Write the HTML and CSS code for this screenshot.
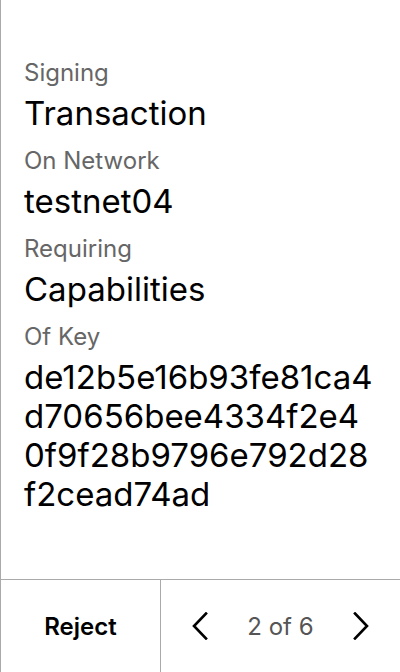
FILE: index.html
```html
<!DOCTYPE html>
<html>
<head>
<meta charset="utf-8">
<link rel="stylesheet" href="styles.css">
</head>
<body>
<div class="screen">
  <main class="content">
    <div class="label">Signing</div>
    <div class="value">Transaction</div>
    <div class="label">On Network</div>
    <div class="value">testnet04</div>
    <div class="label">Requiring</div>
    <div class="value">Capabilities</div>
    <div class="label">Of Key</div>
    <div class="value key">de12b5e16b93fe81ca4d70656bee4334f2e40f9f28b9796e792d28f2cead74ad</div>
  </main>
  <footer class="bar">
    <div class="reject">Reject</div>
    <div class="pager">
      <svg class="chev" width="16" height="28" viewBox="0 0 16 28"><polyline points="14,1.5 2,14 14,26.5" fill="none" stroke="#000" stroke-width="2.6" stroke-linecap="square"/></svg>
      <span class="count">2 of 6</span>
      <svg class="chev" width="16" height="28" viewBox="0 0 16 28"><polyline points="2,1.5 14,14 2,26.5" fill="none" stroke="#000" stroke-width="2.6" stroke-linecap="square"/></svg>
    </div>
  </footer>
</div>
</body>
</html>
```
FILE: styles.css
```css
html, body {
  margin: 0;
  padding: 0;
  background: #fff;
}
body {
  font-family: Inter, "Noto Sans", sans-serif;
  color: #000;
}
.screen {
  width: 400px;
  height: 672px;
  box-sizing: border-box;
  border-left: 1px solid #aaa;
  display: flex;
  flex-direction: column;
}
.content {
  flex: 1;
  padding: 58px 24px 0 23px;
}
.label {
  font-size: 24px;
  line-height: 29px;
  color: #666;
  margin-bottom: 7px;
}
.value {
  font-size: 33px;
  line-height: 38px;
  margin-bottom: 14px;
}
.key {
  word-break: break-all;
  line-height: 39px;
}
.bar {
  height: 92px;
  border-top: 1px solid #aaa;
  display: flex;
  flex-shrink: 0;
}
.reject {
  width: 159px;
  border-right: 1px solid #aaa;
  display: flex;
  align-items: center;
  justify-content: center;
  font-size: 24px;
  font-weight: 600;
}
.pager {
  flex: 1;
  display: flex;
  align-items: center;
  justify-content: space-between;
  padding: 0 31px 0 31px;
}
.count {
  font-size: 24px;
  color: #555;
}
.chev {
  display: block;
}
```
